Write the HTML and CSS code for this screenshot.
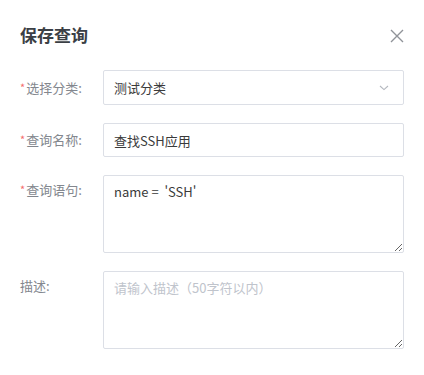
FILE: index.html
```html
<!DOCTYPE html>
<html lang="zh-CN">
<head>
<meta charset="utf-8">
<link rel="stylesheet" href="styles.css">
</head>
<body>
<div class="dialog">
  <div class="header">
    <span class="title">保存查询</span>
    <svg class="close" width="14" height="14" viewBox="0 0 14 14"><path d="M1 1L13 13M13 1L1 13" stroke="#909399" stroke-width="1.4" fill="none"/></svg>
  </div>
  <div class="form">
    <div class="row">
      <label class="label"><span class="star">*</span>选择分类:</label>
      <div class="control select">
        <span class="value">测试分类</span>
        <svg class="chev" width="10" height="6" viewBox="0 0 10 6"><path d="M1 1L5 4.6L9 1" stroke="#b4b8bf" stroke-width="1.1" fill="none"/></svg>
      </div>
    </div>
    <div class="row">
      <label class="label"><span class="star">*</span>查询名称:</label>
      <input class="control input" type="text" value="查找SSH应用">
    </div>
    <div class="row top">
      <label class="label"><span class="star">*</span>查询语句:</label>
      <textarea class="control area">name =  'SSH'</textarea>
    </div>
    <div class="row top">
      <label class="label plain">描述:</label>
      <textarea class="control area" placeholder="请输入描述（50字符以内）"></textarea>
    </div>
  </div>
</div>
</body>
</html>
```
FILE: styles.css
```css
* { box-sizing: border-box; }
html, body { margin: 0; padding: 0; background: #fff; }
body {
  width: 424px;
  height: 375px;
  font-family: "Noto Sans CJK SC", "Noto Sans", sans-serif;
  color: #303133;
}
.dialog { padding: 23px 20px 0 20px; }
.header {
  display: flex;
  align-items: center;
  justify-content: space-between;
  height: 24px;
}
.title {
  font-size: 17px;
  font-weight: 700;
  color: #3b3f45;
  line-height: 24px;
}
.close { margin-top: 2px; }
.form {
  margin-top: 23px;
  display: flex;
  flex-direction: column;
  gap: 18px;
}
.row {
  display: flex;
  align-items: center;
}
.row.top { align-items: flex-start; }
.label {
  width: 83px;
  flex: none;
  font-size: 13px;
  line-height: 34px;
  color: #83878e;
  white-space: nowrap;
}
.row.top .label { line-height: 30px; }
.star {
  color: #f56c6c;
  font-size: 11px;
  margin-right: 1px;
  position: relative;
  top: -1px;
}
.control {
  width: 301px;
  border: 1px solid #dcdfe6;
  border-radius: 2px;
  font-family: "Noto Sans CJK SC", "Noto Sans", sans-serif;
  font-size: 13px;
  color: #3a3a3a;
  background: #fff;
  outline: none;
  margin: 0;
}
.select, .input { height: 34px; }
.row:first-child .select { height: 35px; }
.select {
  display: flex;
  align-items: center;
  justify-content: space-between;
  padding: 0 14px 0 10px;
}
.input { padding: 0 10px; }
.area {
  height: 78px;
  padding: 6px 10px;
  line-height: 20px;
  resize: vertical;
  display: block;
}
.area::placeholder { color: #c0c4cc; }
```
